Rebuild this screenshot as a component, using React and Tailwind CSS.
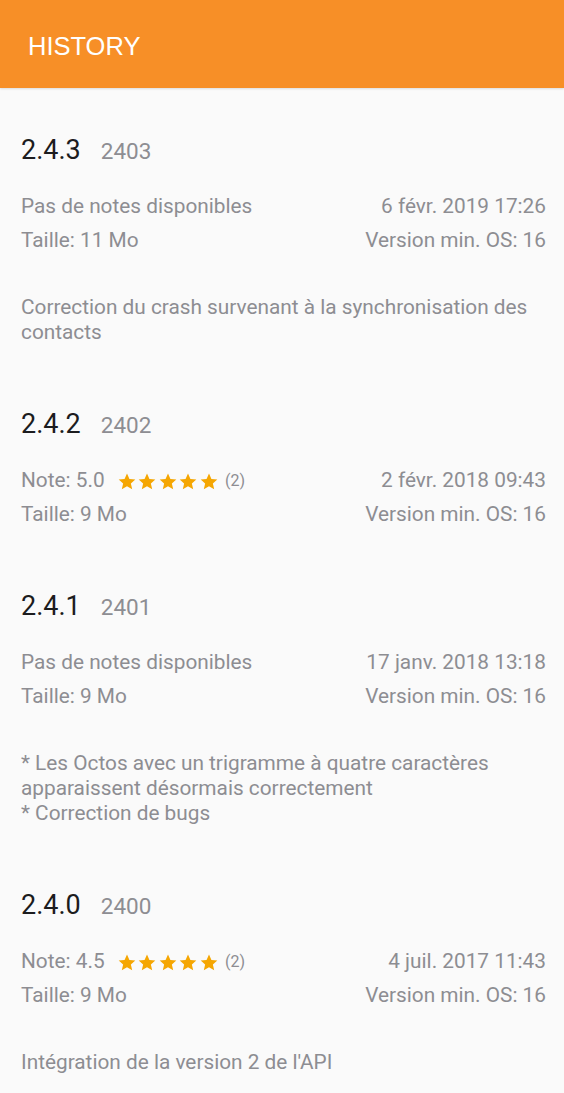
import React from 'react';

const releases = [
  {
    version: '2.4.3',
    build: '2403',
    rating: null,
    date: '6 févr. 2019 17:26',
    size: '11 Mo',
    minOs: '16',
    notes: ['Correction du crash survenant à la synchronisation des contacts'],
  },
  {
    version: '2.4.2',
    build: '2402',
    rating: { value: '5.0', count: 2 },
    date: '2 févr. 2018 09:43',
    size: '9 Mo',
    minOs: '16',
    notes: null,
  },
  {
    version: '2.4.1',
    build: '2401',
    rating: null,
    date: '17 janv. 2018 13:18',
    size: '9 Mo',
    minOs: '16',
    notes: [
      '* Les Octos avec un trigramme à quatre caractères apparaissent désormais correctement',
      '* Correction de bugs',
    ],
  },
  {
    version: '2.4.0',
    build: '2400',
    rating: { value: '4.5', count: 2 },
    date: '4 juil. 2017 11:43',
    size: '9 Mo',
    minOs: '16',
    notes: ["Intégration de la version 2 de l'API"],
  },
];

const Star = () => (
  <svg width="20" height="19" viewBox="0 0 24 24" className="mr-[0.5px]">
    <path
      fill="#f5a602"
      d="M12 1.8l3.09 6.9 7.41.72-5.6 4.98 1.65 7.3L12 17.9l-6.55 3.8 1.65-7.3L1.5 9.42l7.41-.72z"
    />
  </svg>
);

const Stars = ({ count }) => (
  <span className="ml-[12px] flex items-center">
    {[0, 1, 2, 3, 4].map((i) => (
      <Star key={i} />
    ))}
    <span className="ml-[6px] text-[16px]">({count})</span>
  </span>
);

const Release = ({ r }) => (
  <div className={r.notes ? 'pb-[63px]' : 'pb-[58px]'}>
    <div className="flex items-baseline leading-[32px]">
      <span className="text-[27px] text-[#1c1c1e]">{r.version}</span>
      <span className="ml-[20px] text-[22.5px] text-[#8d8d92]">{r.build}</span>
    </div>
    <div className="mt-[23px] text-[20.8px] text-[#8d8d92]">
      <div className="flex items-center justify-between h-[34px]">
        {r.rating ? (
          <span className="flex items-center">
            Note: {r.rating.value}
            <Stars count={r.rating.count} />
          </span>
        ) : (
          <span>Pas de notes disponibles</span>
        )}
        <span>{r.date}</span>
      </div>
      <div className="flex items-center justify-between h-[34px]">
        <span>Taille: {r.size}</span>
        <span>Version min. OS: {r.minOs}</span>
      </div>
    </div>
    {r.notes && (
      <div className="mt-[37px] text-[20.8px] leading-[25px] text-[#8d8d92]">
        {r.notes.map((n, i) => (
          <div key={i}>{n}</div>
        ))}
      </div>
    )}
  </div>
);

export default function App() {
  return (
    <div className="min-h-[1093px] bg-[#fafafa]" style={{ fontFamily: 'Roboto, "Noto Sans", sans-serif' }}>
      <header className="h-[88px] bg-[#f78f27] flex items-center pl-[28px] shadow-[0_1px_2px_rgba(0,0,0,0.12)]">
        <h1
          className="text-[25.5px] text-white pt-[4px]"
          style={{ fontFamily: '"Liberation Sans", Arial, sans-serif' }}
        >
          HISTORY
        </h1>
      </header>
      <main className="pt-[46px] pl-[21px] pr-[18px]">
        {releases.map((r) => (
          <Release key={r.version} r={r} />
        ))}
      </main>
    </div>
  );
}
